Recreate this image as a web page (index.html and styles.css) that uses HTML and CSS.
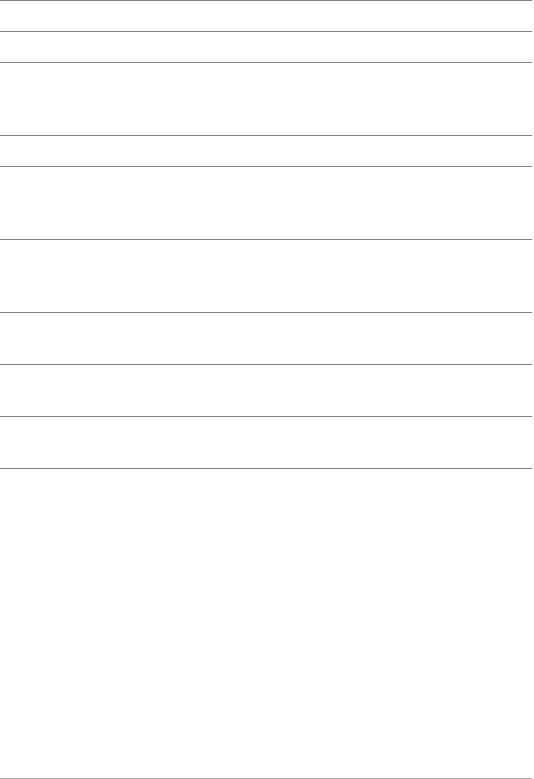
FILE: index.html
```html
<!DOCTYPE html>
<html>
<head>
<meta charset="utf-8">
<link rel="stylesheet" href="styles.css">
</head>
<body>
<div class="list">
  <div class="row short"></div>
  <div class="row short"></div>
  <div class="row tall"></div>
  <div class="row short"></div>
  <div class="row tall"></div>
  <div class="row tall"></div>
  <div class="row mid"></div>
  <div class="row mid"></div>
  <div class="row mid"></div>
  <div class="row footer"></div>
</div>
</body>
</html>
```

FILE: styles.css
```css
html, body {
  margin: 0;
  padding: 0;
  background: #ffffff;
  font-family: "Liberation Sans", Arial, sans-serif;
}
.list {
  width: 532px;
  border-top: 1px solid #808080;
  display: flex;
  flex-direction: column;
}
.row {
  border-bottom: 1px solid #808080;
}
.short { height: 30px; }
.tall { height: 72px; }
.mid { height: 51px; }
.footer {
  height: 309px;
  border-bottom-color: #a9a9a9;
}
```
